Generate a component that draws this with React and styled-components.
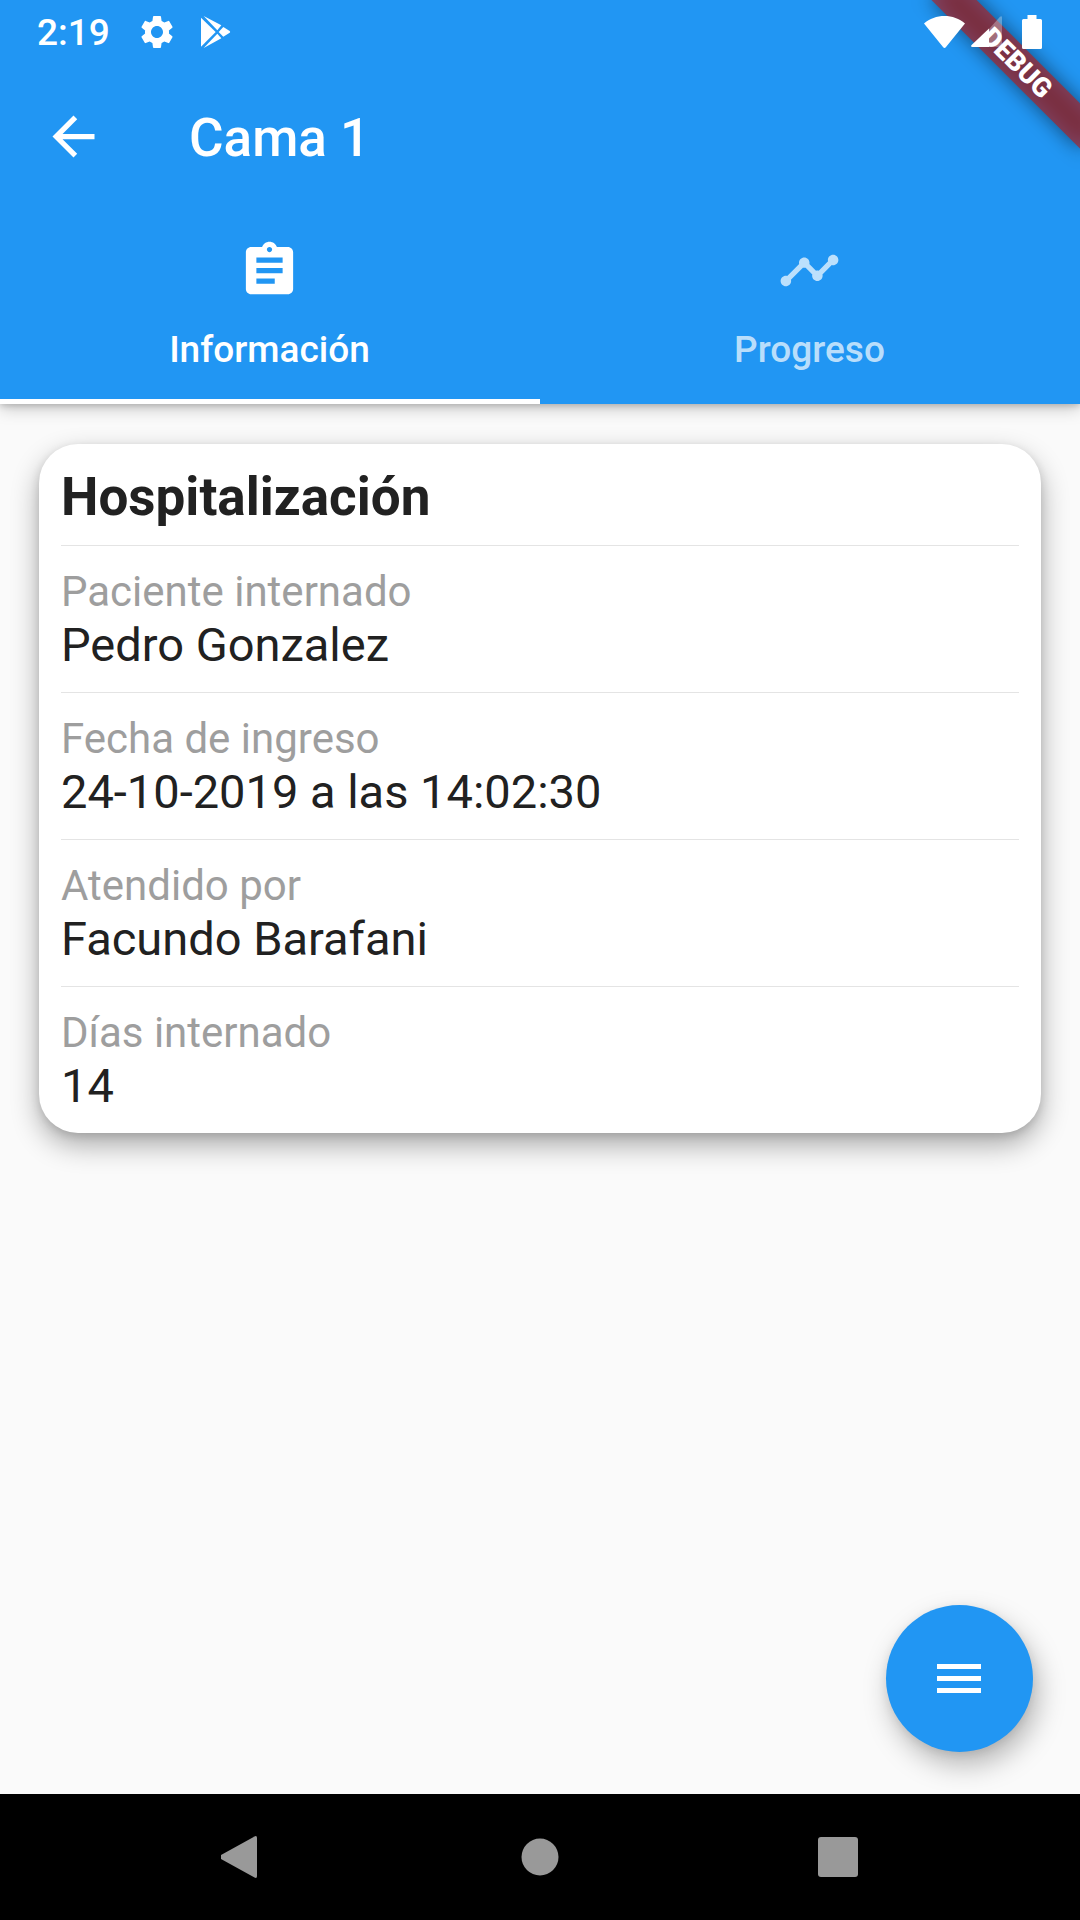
import React, { useState } from "react";
import styled, { createGlobalStyle } from "styled-components";
import { MdArrowBack, MdAssignment, MdSettings, MdTimeline } from "react-icons/md";

const GlobalStyle = createGlobalStyle`
  *, *::before, *::after { box-sizing: border-box; }
  body {
    margin: 0;
    background: #fafafa;
    color: #212121;
    font-family: Roboto, "Liberation Sans", sans-serif;
  }
  button {
    padding: 0;
    border: 0;
    background: none;
    color: inherit;
    font: inherit;
    cursor: pointer;
  }
  svg { display: block; }
`;

const Screen = styled.div`
  position: relative;
  min-height: 100vh;
  display: flex;
  flex-direction: column;
`;

const Header = styled.header`
  position: relative;
  background: #2196f3;
  color: #fff;
  box-shadow: 0 4px 16px rgba(0, 0, 0, 0.22), 0 2px 6px rgba(0, 0, 0, 0.16);
`;

const StatusBar = styled.div`
  position: relative;
  z-index: 2;
  height: 63px;
  padding: 0 38px 0 37px;
  display: flex;
  align-items: center;
  justify-content: space-between;
`;

const StatusGroup = styled.div`
  display: flex;
  align-items: center;
`;

const Clock = styled.time`
  margin-right: 27px;
  padding-top: 2px;
  font-size: 37px;
  line-height: 43px;
  font-weight: 500;
`;

const StatusSlot = styled.span`
  margin-left: ${(p) => p.$gap || 0}px;
`;

const BannerArea = styled.div`
  position: absolute;
  z-index: 1;
  top: 0;
  right: 0;
  width: 200px;
  height: 200px;
  overflow: hidden;
  pointer-events: none;
`;

const Ribbon = styled.div`
  position: absolute;
  top: 47px;
  right: -42px;
  width: 210px;
  height: 32px;
  transform: rotate(45deg);
  color: #fff;
  font-size: 27px;
  line-height: 32px;
  font-weight: 900;
  text-align: center;

  &::before,
  &::after {
    content: "";
    position: absolute;
    z-index: -1;
    inset: 0;
    background: rgba(183, 28, 28, 0.63);
  }
  &::before {
    background: rgba(0, 0, 0, 0.5);
    filter: blur(10px);
  }
`;

const AppBar = styled.div`
  height: 147px;
  padding: 0 42px;
  display: flex;
  align-items: center;
  gap: 84px;
`;

const Title = styled.h1`
  margin: 0;
  padding-top: 3px;
  font-size: 53px;
  line-height: 62px;
  font-weight: 500;
`;

const TabList = styled.div`
  display: grid;
  grid-template-columns: 1fr 1fr;
`;

const Tab = styled.button`
  height: 194px;
  padding: 29px 1px 0 0;
  display: flex;
  flex-direction: column;
  align-items: center;
  gap: 26px;
  border-bottom: 5px solid ${(p) => (p.$active ? "#fff" : "transparent")};
  color: ${(p) => (p.$active ? "#fff" : "rgba(255, 255, 255, 0.7)")};
`;

const TabLabel = styled.span`
  font-size: 37px;
  line-height: 43px;
  font-weight: 500;
`;

const Main = styled.main`
  position: relative;
  flex: 1;
  padding: 40px 39px;
`;

const Card = styled.section`
  padding: 0 22px;
  border-radius: 39px;
  background: #fff;
  box-shadow: 0 12px 28px rgba(0, 0, 0, 0.32), 0 3px 10px rgba(0, 0, 0, 0.12);
`;

const CardTitle = styled.h2`
  margin: 0;
  padding: 22px 0 17px;
  font-size: 53px;
  line-height: 62px;
  font-weight: 700;
`;

const Details = styled.dl`
  margin: 0;
`;

const DetailRow = styled.div`
  padding: 21px 0 18px;
  border-top: 1px solid #e4e4e4;
`;

const DetailLabel = styled.dt`
  color: #9e9e9e;
  font-size: 42px;
  line-height: 49px;
`;

const DetailValue = styled.dd`
  margin: 0;
  font-size: 47px;
  line-height: 58px;
`;

const Fab = styled.button`
  position: absolute;
  right: 47px;
  bottom: 42px;
  width: 147px;
  height: 147px;
  display: grid;
  place-items: center;
  padding-right: 2px;
  border-radius: 50%;
  background: #2196f3;
  color: #fff;
  box-shadow: 5px 13px 28px rgba(0, 0, 0, 0.28), 0 3px 10px rgba(0, 0, 0, 0.08);
`;

const NavBar = styled.nav`
  height: 126px;
  padding: 0 93px;
  display: grid;
  grid-template-columns: repeat(3, 1fr);
  background: #000;
  color: #999;
`;

const NavButton = styled.button`
  display: grid;
  place-items: center;
`;

const PlayIcon = () => (
  <svg width="32" height="34" viewBox="0 0 96 102" fill="currentColor" aria-hidden="true">
    <path d="M3 8 47 51 3 95Z" />
    <path d="M11 3 64 31 52 46Z" />
    <path d="M11 99 64 70 52 56Z" />
    <path d="M56 51 70 36 89 48Q92 51 89 53L70 65Z" />
  </svg>
);

const WifiIcon = () => (
  <svg width="41" height="32" viewBox="0 0 41 32" fill="currentColor" aria-hidden="true">
    <path d="M0 7.5C5.500 2.500 13 0 20.500 0S35.500 2.500 41 7.500L22 31Q20.500 33 19 31Z" />
  </svg>
);

const SignalIcon = () => (
  <svg width="31" height="31" viewBox="0 0 31 31" fill="currentColor" aria-hidden="true">
    <path d="M18 13 29 .800Q31-.6 31 1.500V29.500Q31 31 29.500 31H18Z" opacity=".3" />
    <path d="M18 12.500V31H1.500Q-.8 30.800.600 29Z" />
  </svg>
);

const BatteryIcon = () => (
  <svg width="20" height="34" viewBox="0 0 20 34" fill="currentColor" aria-hidden="true">
    <path d="M5.500 0h9v4H18.500Q20 4 20 5.500v27Q20 34 18.500 34h-17Q0 34 0 32.500v-27Q0 4 1.500 4h4Z" />
  </svg>
);

const MenuIcon = () => (
  <svg width="44" height="29" viewBox="0 0 44 29" fill="currentColor" aria-hidden="true">
    <path d="M0 0h44v5H0zM0 12h44v5H0zM0 24h44v5H0z" />
  </svg>
);

const NavIcon = ({ children }) => (
  <svg width="42" height="42" viewBox="0 0 42 42" fill="currentColor" aria-hidden="true">
    {children}
  </svg>
);

const tabs = [
  { id: "info", label: "Información", Icon: MdAssignment },
  { id: "progress", label: "Progreso", Icon: MdTimeline },
];

const details = [
  ["Paciente internado", "Pedro Gonzalez"],
  ["Fecha de ingreso", "24-10-2019 a las 14:02:30"],
  ["Atendido por", "Facundo Barafani"],
  ["Días internado", "14"],
];

export default function App() {
  const [active, setActive] = useState("info");
  return (
    <>
      <GlobalStyle />
      <Screen>
        <Header>
          <StatusBar>
            <StatusGroup>
              <Clock>2:19</Clock>
              <StatusSlot><MdSettings size={40} /></StatusSlot>
              <StatusSlot $gap={23}><PlayIcon /></StatusSlot>
            </StatusGroup>
            <StatusGroup>
              <StatusSlot><WifiIcon /></StatusSlot>
              <StatusSlot $gap={6}><SignalIcon /></StatusSlot>
              <StatusSlot $gap={20}><BatteryIcon /></StatusSlot>
            </StatusGroup>
          </StatusBar>
          <AppBar>
            <button type="button" aria-label="Volver"><MdArrowBack size={63} /></button>
            <Title>Cama 1</Title>
          </AppBar>
          <TabList role="tablist">
            {tabs.map(({ id, label, Icon }) => (
              <Tab
                key={id}
                type="button"
                role="tab"
                aria-selected={active === id}
                $active={active === id}
                onClick={() => setActive(id)}
              >
                <Icon size={63} />
                <TabLabel>{label}</TabLabel>
              </Tab>
            ))}
          </TabList>
          <BannerArea><Ribbon>DEBUG</Ribbon></BannerArea>
        </Header>
        <Main>
          <Card>
            <CardTitle>Hospitalización</CardTitle>
            <Details>
              {details.map(([label, value]) => (
                <DetailRow key={label}>
                  <DetailLabel>{label}</DetailLabel>
                  <DetailValue>{value}</DetailValue>
                </DetailRow>
              ))}
            </Details>
          </Card>
          <Fab type="button" aria-label="Menú"><MenuIcon /></Fab>
        </Main>
        <NavBar>
          <NavButton type="button" aria-label="Atrás">
            <NavIcon><path d="M33.500.400Q36-.8 36 2v38Q36 42.800 33.500 41.600L0 23Q-2 21 0 19Z" /></NavIcon>
          </NavButton>
          <NavButton type="button" aria-label="Inicio">
            <NavIcon><circle cx="21" cy="21" r="18.500" /></NavIcon>
          </NavButton>
          <NavButton type="button" aria-label="Recientes">
            <NavIcon><rect x="1" y="1" width="40" height="40" rx="3" /></NavIcon>
          </NavButton>
        </NavBar>
      </Screen>
    </>
  );
}
